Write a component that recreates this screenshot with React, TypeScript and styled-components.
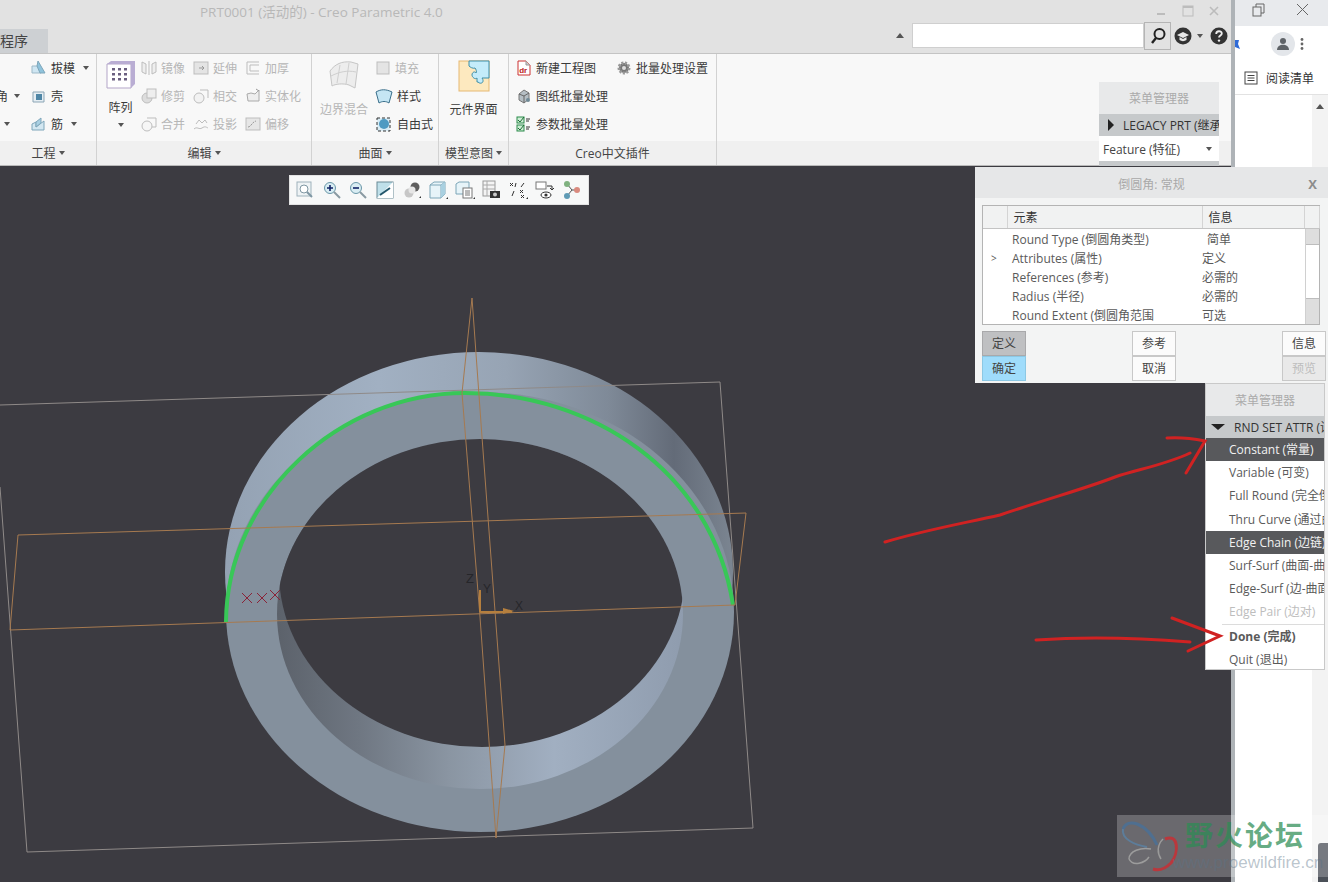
import React from "react";
import styled, { createGlobalStyle } from "styled-components";

const GlobalStyle = createGlobalStyle`
  html, body { margin: 0; padding: 0; background: #fff; }
  body { font-family: "Open Sans", "Noto Sans CJK SC", sans-serif; font-size: 12px; color: #3a3a3a; }
`;

const FONT = `"Open Sans", "Noto Sans CJK SC", sans-serif`;

const Page = styled.div`
  position: relative;
  display: flex;
  width: 1328px;
  height: 882px;
  overflow: hidden;
`;
const Main = styled.div`
  display: flex;
  flex-direction: column;
  width: 1231px;
`;
const Divider = styled.div`
  width: 4px;
  background: #aeb3b7;
`;

/* ---- title bar ---- */
const TitleBar = styled.div`
  display: flex;
  flex-direction: column;
  height: 54px;
  box-sizing: border-box;
  background: #e2e2e2;
  border-bottom: 1px solid #c4c4c4;
`;
const WindowRow = styled.div`
  display: flex;
  justify-content: space-between;
  align-items: center;
  height: 22px;
  padding: 0 10px 0 200px;
`;
const WindowTitle = styled.span`
  font-size: 13.5px;
  color: #b8b8b8;
`;
const WindowButtons = styled.div`
  display: flex;
  gap: 12px;
`;
const CommandRow = styled.div`
  display: flex;
  justify-content: space-between;
  align-items: flex-end;
  height: 31px;
`;
const ActiveTab = styled.div`
  width: 48px;
  height: 24px;
  background: #cdd0d3;
  font-size: 14px;
  line-height: 23px;
  color: #444;
  overflow: hidden;
`;
const SearchArea = styled.div`
  display: flex;
  align-items: center;
  height: 31px;
  margin-right: 3px;
  margin-bottom: 2px;
`;
const CollapseCaret = styled.span`
  width: 0;
  height: 0;
  margin-right: 8px;
  border-left: 4px solid transparent;
  border-right: 4px solid transparent;
  border-bottom: 5px solid #555;
`;
const SearchBox = styled.div`
  width: 230px;
  height: 23px;
  background: #fff;
  border: 1px solid #cfcfcf;
`;
const SearchButton = styled.div`
  display: flex;
  align-items: center;
  justify-content: center;
  width: 25px;
  height: 26px;
  margin-right: 3px;
  border: 1px solid #b5b5b5;
`;

/* ---- ribbon ---- */
const Ribbon = styled.div`
  position: relative;
  display: flex;
  height: 112px;
  background: linear-gradient(#f8f8f8 0, #f8f8f8 87px, #f0f0f0 87px, #f0f0f0 100%);
  border-bottom: 1px solid #b9b9b9;
  box-sizing: border-box;
  overflow: hidden;
`;
const Group = styled.div<{ $w: number }>`
  display: flex;
  flex-direction: column;
  width: ${(p) => p.$w}px;
  border-right: 1px solid #d2d2d2;
  box-sizing: border-box;
`;
const GroupBody = styled.div<{ $pad?: number }>`
  display: flex;
  height: 87px;
  padding-left: ${(p) => p.$pad ?? 0}px;
`;
const GroupFooter = styled.div`
  display: flex;
  align-items: center;
  justify-content: center;
  gap: 3px;
  flex: 1;
  font-size: 12px;
  color: #444;
`;
const ToolColumn = styled.div<{ $w: number }>`
  display: flex;
  flex-direction: column;
  width: ${(p) => p.$w}px;
  flex: none;
`;
const Tool = styled.div<{ $muted?: boolean }>`
  display: flex;
  align-items: center;
  gap: 4px;
  height: 28px;
  white-space: nowrap;
  font-size: 12px;
  color: ${(p) => (p.$muted ? "#b6b6b6" : "#3a3a3a")};
`;
const BigTool = styled.div<{ $w: number; $muted?: boolean }>`
  display: flex;
  flex-direction: column;
  align-items: center;
  width: ${(p) => p.$w}px;
  flex: none;
  padding-top: 6px;
  font-size: 12px;
  color: ${(p) => (p.$muted ? "#b6b6b6" : "#3a3a3a")};
`;
const BigLabel = styled.span`
  margin-top: 10px;
  line-height: 16px;
`;
const Caret = styled.span<{ $gap?: number }>`
  display: inline-block;
  width: 0;
  height: 0;
  margin-left: ${(p) => p.$gap ?? 0}px;
  border-left: 3.5px solid transparent;
  border-right: 3.5px solid transparent;
  border-top: 4px solid #555;
`;
const RowTools = styled.div`
  display: flex;
  gap: 20px;
`;

/* ---- canvas ---- */
const Canvas = styled.div`
  position: relative;
  flex: 1;
  background: #3c3b41;
`;
const CanvasDrawing = styled.svg`
  display: block;
  width: 100%;
  height: 100%;
`;
const ViewBar = styled.div`
  position: absolute;
  left: 289px;
  top: 9px;
  display: flex;
  align-items: center;
  height: 30px;
  padding: 0 3px 0 2px;
  box-sizing: border-box;
  background: #f7f8f8;
  border: 1px solid #e3e3e3;
`;
const ViewButton = styled.div`
  display: flex;
  align-items: center;
  justify-content: center;
  width: 26.6px;
`;

/* ---- browser pane ---- */
const Browser = styled.div`
  display: flex;
  flex-direction: column;
  flex: 1;
  background: #fff;
`;
const BrowserTop = styled.div`
  display: flex;
  align-items: center;
  gap: 30px;
  height: 26px;
  padding: 0 17px 6px 16px;
  box-sizing: border-box;
  background: #e8eaed;
`;
const BrowserAddress = styled.div`
  display: flex;
  align-items: center;
  height: 35px;
`;
const AvatarCircle = styled.div`
  display: flex;
  align-items: center;
  justify-content: center;
  width: 24px;
  height: 24px;
  margin-left: 26px;
  border-radius: 50%;
  background: #e3e6ea;
`;
const BookmarkRow = styled.div`
  display: flex;
  align-items: center;
  gap: 8px;
  height: 33px;
  padding-left: 9px;
  border-bottom: 1px solid #e2e2e2;
  font-size: 12px;
  color: #333;
`;
const BrowserBody = styled.div`
  display: flex;
  justify-content: flex-end;
  flex: 1;
`;
const ScrollTrack = styled.div`
  position: relative;
  width: 16px;
  background: #f3f3f3;
`;
const ScrollArrow = styled.span`
  position: absolute;
  left: 4px;
  top: 9px;
  width: 0;
  height: 0;
  border-left: 4px solid transparent;
  border-right: 4px solid transparent;
  border-bottom: 5px solid #555;
`;
const ScrollThumb = styled.div`
  position: absolute;
  right: 0;
  bottom: 0;
  width: 10px;
  height: 39px;
  background: #4b5058;
  border-radius: 3px 0 0 0;
`;

/* ---- floating menu manager ---- */
const MenuManager = styled.div<{ $l: number; $t: number }>`
  position: absolute;
  left: ${(p) => p.$l}px;
  top: ${(p) => p.$t}px;
  width: 120px;
  overflow: hidden;
  background: #fff;
  font-family: ${FONT};
  font-size: 12px;
  white-space: nowrap;
`;
const MenuTitle = styled.div`
  height: 32px;
  line-height: 33px;
  text-align: center;
  background: #e8e9ea;
  color: #ababab;
`;
const MenuHeader = styled.div`
  display: flex;
  align-items: center;
  gap: 9px;
  height: 22px;
  padding-left: 5px;
  background: #c6c9cb;
  color: #333;
`;
const MenuItem = styled.div<{ $on?: boolean; $off?: boolean; $bold?: boolean }>`
  height: 23.2px;
  line-height: 23px;
  padding-left: 23px;
  background: ${(p) => (p.$on ? "#58595c" : "#fff")};
  color: ${(p) => (p.$on ? "#f2f2f2" : p.$off ? "#bdbdbd" : "#5a5a5a")};
  font-weight: ${(p) => (p.$bold ? 700 : 400)};
`;
const MenuRule = styled.div`
  height: 1px;
  margin-left: 16px;
  background: #dcdcdc;
`;
const FeatureRow = styled.div`
  display: flex;
  align-items: center;
  justify-content: space-between;
  height: 25px;
  padding: 0 7px 0 4px;
  background: #fff;
  color: #444;
`;
const TriRight = styled.span`
  width: 0;
  height: 0;
  border-top: 6px solid transparent;
  border-bottom: 6px solid transparent;
  border-left: 6px solid #222;
  margin-left: 4px;
`;
const TriDown = styled.span`
  width: 0;
  height: 0;
  border-left: 7px solid transparent;
  border-right: 7px solid transparent;
  border-top: 6px solid #222;
`;
const MenuFrame = styled(MenuManager)`
  height: 287px;
  border: 1px solid #c9c9c9;
  box-sizing: border-box;
`;

/* ---- round dialog ---- */
const Dialog = styled.div`
  position: absolute;
  left: 975px;
  top: 167px;
  width: 353px;
  height: 216px;
  box-sizing: border-box;
  background: #f3f4f4;
  font-family: ${FONT};
`;
const DialogTitle = styled.div`
  position: relative;
  height: 31px;
  line-height: 35px;
  text-align: center;
  background: #e6e7e8;
  color: #a9a9a9;
`;
const DialogClose = styled.span`
  position: absolute;
  right: 11px;
  top: 0;
  font-size: 13px;
  font-weight: 700;
  color: #8c8c8c;
`;
const DialogBody = styled.div`
  padding: 7px 8px 0 7px;
`;
const StepFrame = styled.div`
  width: 338px;
  height: 120px;
  box-sizing: border-box;
  background: #fff;
  border: 1px solid #b4b4b4;
`;
const StepTable = styled.table`
  width: 336px;
  border-collapse: collapse;
  table-layout: fixed;
  thead > tr { background-color: #f1f2f2; }
  th {
    height: 22px;
    padding: 0 0 0 6px;
    text-align: left;
    font-weight: 400;
    color: #333;
    border-right: 1px solid #d4d4d4;
    border-bottom: 1px solid #c4c4c4;
  }
  td {
    height: 19px;
    padding: 0 0 0 5px;
    white-space: nowrap;
    overflow: hidden;
    color: #5a5a5a;
  }
  td:first-child { font-size: 10px; padding-left: 8px; }
  td:last-child { padding: 0; }
`;
const StepScroll = styled.div`
  display: flex;
  flex-direction: column;
  align-items: stretch;
  width: 15px;
  height: 95px;
  margin-left: 1px;
  background: #dedede;
  border-left: 1px solid #d0d0d0;
  box-sizing: border-box;
`;
const StepThumb = styled.div`
  height: 53px;
  margin-top: 15px;
  background: #fff;
  border-top: 1px solid #bdbdbd;
  border-bottom: 1px solid #bdbdbd;
`;
const ButtonRows = styled.div`
  display: flex;
  justify-content: space-between;
  margin-top: 6px;
  margin-right: -6px;
`;
const ButtonStack = styled.div`
  display: flex;
  flex-direction: column;
`;
const DialogButton = styled.div<{ $kind?: "pressed" | "ok" | "off" }>`
  width: 44px;
  height: 25px;
  box-sizing: border-box;
  line-height: 23px;
  text-align: center;
  font-size: 12px;
  color: ${(p) => (p.$kind === "off" ? "#bdbdbd" : "#444")};
  background: ${(p) =>
    p.$kind === "pressed" ? "#bfc0c2" : p.$kind === "ok" ? "#9fdcfb" : p.$kind === "off" ? "#e9e9e9" : "#fbfbfb"};
  border: 1px solid ${(p) => (p.$kind === "pressed" ? "#a9a9ab" : p.$kind === "ok" ? "#8cc8e4" : "#c8c8c8")};
`;

/* ---- overlays ---- */
const ArrowLayer = styled.svg`
  position: absolute;
  left: 0;
  top: 0;
  width: 1328px;
  height: 882px;
  pointer-events: none;
`;
const Watermark = styled.div`
  position: absolute;
  left: 1117px;
  top: 815px;
  display: flex;
  width: 211px;
  height: 62px;
  background: rgba(255, 255, 255, 0.24);
`;
const WatermarkText = styled.div`
  display: flex;
  flex-direction: column;
  padding-left: 2px;
`;
const WatermarkTitle = styled.div`
  font-family: "Noto Sans CJK SC", sans-serif;
  font-size: 28px;
  font-weight: 700;
  line-height: 38px;
  letter-spacing: 2px;
  color: rgba(44, 140, 84, 0.72);
`;
const WatermarkUrl = styled.div`
  margin-left: -12px;
  font-family: "Liberation Sans", sans-serif;
  font-size: 17px;
  line-height: 20px;
  white-space: nowrap;
  color: rgba(90, 115, 135, 0.42);
`;

const Svg = styled.svg`
  display: block;
  flex: none;
`;

const Ic = ({ s = 16, vb = 16, children }: { s?: number; vb?: number; children: React.ReactNode }) => (
  <Svg width={s} height={s} viewBox={`0 0 ${vb} ${vb}`} fill="none">
    {children}
  </Svg>
);

const G = "#bdbdbd";

const Icons = {
  draft: (
    <Ic>
      <path d="M1 13V6h6l3 7z" fill="#cfe6f2" stroke="#9db9c8" />
      <path d="M7 1l7 12H9L6 6z" fill="#8fc3dc" stroke="#7ea6ba" />
    </Ic>
  ),
  shell: (
    <Ic>
      <path d="M2 4h11v10H2z" fill="#e6eef3" stroke="#8ba5b5" />
      <path d="M5 6h6v6H5z" fill="#4f86a6" />
    </Ic>
  ),
  rib: (
    <Ic>
      <path d="M1 8l4-2v5l8-6v9H1z" fill="#d3e7f1" stroke="#7ea6ba" />
      <path d="M5 6l5-4v5l-5 4z" fill="#a9d0e3" stroke="#7ea6ba" />
    </Ic>
  ),
  pattern: (
    <Ic s={30} vb={30}>
      <path d="M1 4h24v24H1z" fill="#fff" stroke="#b3a5c8" />
      <path d="M1 4l4-3h24l-4 3zM25 4l4-3v23l-4 4z" fill="#b9add3" />
      {[8, 13, 18, 23].slice(0, 3).map((y) =>
        [6, 12, 18].map((x) => <rect key={`${x}${y}`} x={x} y={y} width="3" height="2.5" fill="#6a5f80" />)
      )}
    </Ic>
  ),
  mirror: (
    <Ic>
      <path d="M1 2l4 2v10l-4-2zM15 2l-4 2v10l4-2z" stroke={G} fill="#eee" />
      <path d="M8 1v14" stroke={G} />
    </Ic>
  ),
  extend: (
    <Ic>
      <rect x="1" y="2" width="14" height="12" fill="#e4e4e4" stroke={G} />
      <path d="M6 8h5M9 6l2 2-2 2" stroke="#999" />
    </Ic>
  ),
  thicken: (
    <Ic>
      <path d="M2 2h12M2 2v12h12M5 5h9M5 5v6h9" stroke={G} />
    </Ic>
  ),
  trim: (
    <Ic>
      <circle cx="6" cy="10" r="5" fill="#ddd" stroke={G} />
      <rect x="6" y="1" width="9" height="9" fill="#eee" stroke={G} />
    </Ic>
  ),
  intersect: (
    <Ic>
      <circle cx="6" cy="10" r="5" stroke={G} fill="#f2f2f2" />
      <path d="M7 2h8v8" stroke={G} />
    </Ic>
  ),
  solidify: (
    <Ic>
      <path d="M2 6l4-1 4 1 4-4v11H3z" stroke="#aaa" fill="#eee" />
      <path d="M11 1l3 2" stroke="#999" />
    </Ic>
  ),
  merge: (
    <Ic>
      <circle cx="6" cy="10" r="5" stroke={G} fill="#f6f6f6" />
      <path d="M6 2h9v9H11" stroke={G} />
    </Ic>
  ),
  project: (
    <Ic>
      <path d="M1 13c3-3 5 1 8-1s4-1 6 0" stroke={G} />
      <path d="M3 8l3-4 3 3 3-3 2 3" stroke={G} />
    </Ic>
  ),
  offset: (
    <Ic>
      <rect x="1" y="2" width="14" height="12" fill="#e6e6e6" stroke={G} />
      <path d="M3 11c3 0 4-5 8-6" stroke="#999" strokeDasharray="2 1" />
    </Ic>
  ),
  boundary: (
    <Ic s={32} vb={32}>
      <path d="M2 11C7 4 14 1 23 2l7 2-3 24-6-3C15 23 7 24 4 26z" fill="#ededed" stroke="#c6c6c6" />
      <path d="M12 5L9 23M21 3L18 24M3 16c8-4 16-6 25-4" stroke="#cfcfcf" />
    </Ic>
  ),
  fill: (
    <Ic>
      <rect x="2" y="2" width="12" height="12" fill="#e4e4e4" stroke={G} />
    </Ic>
  ),
  style: (
    <Ic s={18} vb={18}>
      <path d="M1 5c5-3 10-3 16 0l-3 11c-3-2-7-2-10 0z" fill="#c5e6f4" stroke="#3a6f8b" />
    </Ic>
  ),
  freestyle: (
    <Ic s={18} vb={18}>
      <rect x="2" y="3" width="13" height="13" fill="#d9ecf5" stroke="#333" strokeDasharray="3 2" />
      <circle cx="9" cy="9" r="5" fill="#4d9ac2" />
    </Ic>
  ),
  puzzle: (
    <Ic s={32} vb={32}>
      <rect x="1" y="1" width="30" height="30" fill="#fde9bf" stroke="#e5b872" />
      <path d="M11 1h20v17h-7c3 4-1 7-4 4h-1v-4c-2 2-5-1-5-3 0-3 3-4 4-2 1-1 0-4-1-5-2 1-5-1-6-2z" fill="#c4ecfa" stroke="#3f8fa8" />
    </Ic>
  ),
  drawing: (
    <Ic>
      <path d="M2 1h8l4 4v10H2z" fill="#fff" stroke="#c33" />
      <path d="M10 1v4h4" fill="#ccc" stroke="#999" />
      <text x="3.2" y="13" fontSize="8" fontFamily="Liberation Sans" fontWeight="700" fill="#b22">
        dr
      </text>
    </Ic>
  ),
  gear: (
    <Ic>
      <circle cx="8" cy="8" r="5" fill="#777" stroke="#999" strokeWidth="3" strokeDasharray="2 1.4" />
      <circle cx="8" cy="8" r="2" fill="#ddd" />
    </Ic>
  ),
  press: (
    <Ic>
      <path d="M3 6l5-4 5 3v6l-5 4-5-3z" fill="#b5bec4" stroke="#777" />
      <path d="M8 8v7M3 6l5 2 5-3" stroke="#666" />
      <circle cx="12" cy="12" r="2" fill="#6f8996" />
    </Ic>
  ),
  params: (
    <Ic>
      <rect x="1" y="1" width="7" height="6" fill="#cfeed6" stroke="#2a8a4a" />
      <rect x="1" y="9" width="7" height="6" fill="#cfeed6" stroke="#2a8a4a" />
      <path d="M2 4l2 2 4-5M2 12l2 2 4-5" stroke="#1c6a35" />
      <path d="M10 3h4M10 5h3M10 11h4M10 13h3" stroke="#333" />
    </Ic>
  ),
};

const viewIcons = [
  <Ic key="a" s={18} vb={18}>
    <rect x="1" y="1" width="14" height="14" fill="#eef3f5" stroke="#9fb2bb" />
    <circle cx="8" cy="8" r="4" fill="#fff" stroke="#7f97a3" />
    <path d="M11 11l5 5" stroke="#7f97a3" strokeWidth="2" />
  </Ic>,
  <Ic key="b" s={18} vb={18}>
    <circle cx="7" cy="7" r="5.5" fill="#d9edf3" stroke="#6a97a8" />
    <path d="M4 7h6M7 4v6" stroke="#126" strokeWidth="1.6" />
    <path d="M11 11l6 6" stroke="#8a9aa2" strokeWidth="2" />
  </Ic>,
  <Ic key="c" s={18} vb={18}>
    <circle cx="7" cy="7" r="5.5" fill="#d9edf3" stroke="#6a97a8" />
    <path d="M4 7h6" stroke="#126" strokeWidth="1.6" />
    <path d="M11 11l6 6" stroke="#8a9aa2" strokeWidth="2" />
  </Ic>,
  <Ic key="d" s={18} vb={18}>
    <rect x="1" y="1" width="16" height="16" fill="#bfe0ea" stroke="#6b8a96" />
    <path d="M1 17L17 1v16z" fill="#fff" />
    <path d="M4 14l10-7" stroke="#23566b" strokeWidth="2" />
  </Ic>,
  <Ic key="e" s={20} vb={20}>
    <circle cx="7" cy="13" r="4.5" fill="#c7c7c7" />
    <circle cx="13" cy="7" r="4.5" fill="#5d5d5d" />
    <circle cx="10" cy="10" r="3.5" fill="#e6e6e6" />
    <path d="M17 18h2v-2z" fill="#333" />
  </Ic>,
  <Ic key="f" s={20} vb={20}>
    <path d="M2 5l4-3h11v12l-4 4H2z" fill="#e7f4f9" stroke="#7ca6b8" />
    <path d="M13 5h-11M13 5l4-3M13 5v13" stroke="#7ca6b8" />
    <path d="M13 5l4-3v12l-4 4z" fill="#a9d0e0" />
    <path d="M18 19h2v-2z" fill="#333" />
  </Ic>,
  <Ic key="g" s={20} vb={20}>
    <path d="M1 4l3-2h10v12H1z" fill="#e7f4f9" stroke="#7ca6b8" />
    <rect x="8" y="8" width="9" height="10" fill="#fff" stroke="#777" />
    <path d="M10 11h5M10 13h5M10 15h5" stroke="#777" />
    <path d="M18 19h2v-2z" fill="#333" />
  </Ic>,
  <Ic key="h" s={20} vb={20}>
    <rect x="2" y="1" width="12" height="15" fill="#f4f4f4" stroke="#999" />
    <path d="M2 5h12M2 9h12M6 1v15" stroke="#aaa" />
    <rect x="9" y="11" width="10" height="7" fill="#333" />
    <circle cx="14" cy="14.5" r="2" fill="#ccc" />
  </Ic>,
  <Ic key="i" s={20} vb={20}>
    <path d="M2 3l3 3M5 3L2 6M12 10l3 3M15 10l-3 3M13 15l3 3M16 15l-3 3" stroke="#333" />
    <path d="M8 3l-1 4M4 16l2-5M16 3l-3 4" stroke="#333" />
    <path d="M18 19h2v-2z" fill="#333" />
  </Ic>,
  <Ic key="j" s={20} vb={20}>
    <rect x="1" y="2" width="10" height="7" fill="#fff" stroke="#777" />
    <path d="M12 6h5v4M15 8l2 2 2-2" stroke="#333" />
    <ellipse cx="11" cy="15" rx="5" ry="3" fill="#fff" stroke="#333" />
    <circle cx="11" cy="15" r="1.6" fill="#333" />
  </Ic>,
  <Ic key="k" s={20} vb={20}>
    <path d="M6 4l5 6-5 6M11 10h5" stroke="#555" />
    <circle cx="6" cy="4" r="3" fill="#7fb17f" />
    <circle cx="16" cy="10" r="3" fill="#d98a7f" />
    <circle cx="6" cy="16" r="3" fill="#5f9bb5" />
  </Ic>,
];

const dialogRows: [string, string, string][] = [
  ["", "Round Type (倒圆角类型)", "简单"],
  [">", "Attributes (属性)", "定义"],
  ["", "References (参考)", "必需的"],
  ["", "Radius (半径)", "必需的"],
  ["", "Round Extent (倒圆角范围", "可选"],
];

const RingDrawing = () => (
  <CanvasDrawing viewBox="0 166 1231 716">
    <defs>
      <linearGradient id="outerWall" gradientUnits="userSpaceOnUse" x1="226" x2="735" y1="0" y2="0">
        <stop offset="0" stopColor="#94a2b3" />
        <stop offset="0.3" stopColor="#a1b0c2" />
        <stop offset="0.55" stopColor="#97a4b4" />
        <stop offset="0.75" stopColor="#7f8a98" />
        <stop offset="0.88" stopColor="#636b78" />
        <stop offset="1" stopColor="#7c8692" />
      </linearGradient>
      <linearGradient id="innerWall" gradientUnits="userSpaceOnUse" x1="278" x2="684" y1="0" y2="0">
        <stop offset="0" stopColor="#5c626b" />
        <stop offset="0.2" stopColor="#6f7782" />
        <stop offset="0.42" stopColor="#8a95a2" />
        <stop offset="0.68" stopColor="#a1afc1" />
        <stop offset="1" stopColor="#8f9cae" />
      </linearGradient>
      <clipPath id="frontHole">
        <ellipse cx="480" cy="614" rx="203" ry="175" />
      </clipPath>
    </defs>
    <ellipse cx="479" cy="572" rx="254" ry="220" fill="url(#outerWall)" />
    <ellipse cx="480" cy="612" rx="254" ry="220" fill="#84909d" />
    <ellipse cx="480" cy="614" rx="203" ry="175" fill="url(#innerWall)" />
    <ellipse cx="482" cy="572" rx="203" ry="175" fill="#3c3b41" clipPath="url(#frontHole)" />
    <path
      d="M226 622C227 495 340 393 465 393C590 393 712 470 733 605"
      stroke="#38c757"
      strokeWidth="4"
      fill="none"
    />
    <path d="M0 405L720 382L753 828L27 852L0 487" stroke="#8f8a88" fill="none" />
    <path d="M18 535L746 513L735 605L10 630Z" stroke="#a67a50" fill="none" />
    <path
      d="M472 298L462 393L480 617L496 838L505 745L482 437Z"
      stroke="#a67a50"
      fill="none"
    />
    <path d="M480 590V612M480 612H512" stroke="#b57f3e" strokeWidth="2" />
    <path d="M503 608L514 611L503 614Z" fill="#b57f3e" />
    <text x="466" y="583" fontSize="13" fill="#26262a" fontFamily="Liberation Sans">
      Z
    </text>
    <text x="483" y="593" fontSize="12" fill="#26262a" fontFamily="Liberation Sans">
      Y
    </text>
    <text x="515" y="610" fontSize="12" fill="#26262a" fontFamily="Liberation Sans">
      X
    </text>
    {[247, 262, 275].map((x, i) => (
      <path
        key={x}
        d={`M${x - 5} ${(i === 2 ? 595 : 598) - 5}l10 10m0 -10l-10 10`}
        stroke="#8a2338"
        strokeWidth="1"
      />
    ))}
  </CanvasDrawing>
);

export default function App() {
  return (
    <Page>
      <GlobalStyle />
      <Main>
        <TitleBar>
          <WindowRow>
            <WindowTitle>PRT0001 (活动的) - Creo Parametric 4.0</WindowTitle>
            <WindowButtons>
              <Ic s={14} vb={14}>
                <path d="M2 10h8" stroke="#bcbcbc" strokeWidth="2" />
              </Ic>
              <Ic s={14} vb={14}>
                <rect x="2" y="2" width="10" height="10" stroke="#bcbcbc" />
                <path d="M2 3h10" stroke="#bcbcbc" strokeWidth="2" />
              </Ic>
              <Ic s={14} vb={14}>
                <path d="M3 3l8 8m0-8l-8 8" stroke="#bcbcbc" strokeWidth="1.6" />
              </Ic>
            </WindowButtons>
          </WindowRow>
          <CommandRow>
            <ActiveTab>程序</ActiveTab>
            <SearchArea>
              <CollapseCaret />
              <SearchBox />
              <SearchButton>
                <Ic s={18} vb={18}>
                  <circle cx="10.5" cy="7" r="5" stroke="#222" strokeWidth="2" />
                  <path d="M7 11l-4 5" stroke="#222" strokeWidth="2.4" />
                </Ic>
              </SearchButton>
              <Ic s={18} vb={18}>
                <circle cx="9" cy="9" r="8.5" fill="#333" />
                <path d="M3 8l6-3 6 3-6 3z" fill="#e8e8e8" />
                <path d="M5.5 10v3c2 1.5 5 1.5 7 0v-3L9 12z" fill="#e8e8e8" />
              </Ic>
              <Caret $gap={5} />
              <span style={{ width: 7 }} />
              <Ic s={18} vb={18}>
                <circle cx="9" cy="9" r="8.5" fill="#333" />
                <path d="M6.2 7c0-3.6 5.6-3.6 5.6-.4 0 2-2.8 2-2.8 4" stroke="#eee" strokeWidth="1.8" />
                <circle cx="9" cy="13.6" r="1.2" fill="#eee" />
              </Ic>
            </SearchArea>
          </CommandRow>
        </TitleBar>

        <Ribbon>
          <Group $w={97}>
            <GroupBody>
              <ToolColumn $w={31}>
                <Tool />
                <Tool style={{ marginLeft: -4 }}>
                  角<Caret $gap={2} />
                </Tool>
                <Tool>
                  <Caret $gap={4} />
                </Tool>
              </ToolColumn>
              <ToolColumn $w={60}>
                <Tool>
                  {Icons.draft}拔模
                  <Caret $gap={4} />
                </Tool>
                <Tool>{Icons.shell}壳</Tool>
                <Tool>
                  {Icons.rib}筋
                  <Caret $gap={4} />
                </Tool>
              </ToolColumn>
            </GroupBody>
            <GroupFooter>
              工程
              <Caret />
            </GroupFooter>
          </Group>

          <Group $w={215}>
            <GroupBody $pad={7}>
              <BigTool $w={33}>
                {Icons.pattern}
                <BigLabel>阵列</BigLabel>
                <Caret $gap={0} style={{ marginTop: 7 }} />
              </BigTool>
              <ToolColumn $w={52} style={{ marginLeft: 4 }}>
                <Tool $muted>{Icons.mirror}镜像</Tool>
                <Tool $muted>{Icons.trim}修剪</Tool>
                <Tool $muted>{Icons.merge}合并</Tool>
              </ToolColumn>
              <ToolColumn $w={52}>
                <Tool $muted>{Icons.extend}延伸</Tool>
                <Tool $muted>{Icons.intersect}相交</Tool>
                <Tool $muted>{Icons.project}投影</Tool>
              </ToolColumn>
              <ToolColumn $w={60}>
                <Tool $muted>{Icons.thicken}加厚</Tool>
                <Tool $muted>{Icons.solidify}实体化</Tool>
                <Tool $muted>{Icons.offset}偏移</Tool>
              </ToolColumn>
            </GroupBody>
            <GroupFooter>
              编辑
              <Caret />
            </GroupFooter>
          </Group>

          <Group $w={127}>
            <GroupBody $pad={7}>
              <BigTool $w={50} $muted>
                {Icons.boundary}
                <BigLabel>边界混合</BigLabel>
              </BigTool>
              <ToolColumn $w={60} style={{ marginLeft: 6 }}>
                <Tool $muted>
                  {Icons.fill}
                  <span style={{ color: "#b6b6b6" }}>填充</span>
                </Tool>
                <Tool>{Icons.style}样式</Tool>
                <Tool>{Icons.freestyle}自由式</Tool>
              </ToolColumn>
            </GroupBody>
            <GroupFooter>
              曲面
              <Caret />
            </GroupFooter>
          </Group>

          <Group $w={70}>
            <GroupBody $pad={9}>
              <BigTool $w={51}>
                {Icons.puzzle}
                <BigLabel>元件界面</BigLabel>
              </BigTool>
            </GroupBody>
            <GroupFooter>
              模型意图
              <Caret />
            </GroupFooter>
          </Group>

          <Group $w={208}>
            <GroupBody $pad={7}>
              <ToolColumn $w={190}>
                <RowTools>
                  <Tool>{Icons.drawing}新建工程图</Tool>
                  <Tool>{Icons.gear}批量处理设置</Tool>
                </RowTools>
                <Tool>{Icons.press}图纸批量处理</Tool>
                <Tool>{Icons.params}参数批量处理</Tool>
              </ToolColumn>
            </GroupBody>
            <GroupFooter>Creo中文插件</GroupFooter>
          </Group>
        </Ribbon>

        <Canvas>
          <RingDrawing />
          <ViewBar>
            {viewIcons.map((icon, i) => (
              <ViewButton key={i}>{icon}</ViewButton>
            ))}
          </ViewBar>
        </Canvas>
      </Main>
      <Divider />
      <Browser>
        <BrowserTop>
          <Ic s={14} vb={14}>
            <rect x="2" y="4" width="8" height="9" stroke="#666" />
            <path d="M5 4V1h8v9h-3" stroke="#666" />
          </Ic>
          <Ic s={14} vb={14}>
            <path d="M2 1l11 11m0-11L2 12" stroke="#666" />
          </Ic>
        </BrowserTop>
        <BrowserAddress>
          <Ic s={10} vb={10}>
            <path d="M0 1h4L3 5l2 5-5-2z" fill="#2f6bd8" />
          </Ic>
          <AvatarCircle>
            <Ic s={14} vb={14}>
              <circle cx="7" cy="4" r="3" fill="#5f6368" />
              <path d="M1 13c0-7 12-7 12 0z" fill="#5f6368" />
            </Ic>
          </AvatarCircle>
          <Ic s={14} vb={14}>
            <circle cx="7" cy="2.5" r="1.4" fill="#666" />
            <circle cx="7" cy="7" r="1.4" fill="#666" />
            <circle cx="7" cy="11.5" r="1.4" fill="#666" />
          </Ic>
        </BrowserAddress>
        <BookmarkRow>
          <Ic s={14} vb={14}>
            <rect x="1" y="1" width="12" height="12" stroke="#444" />
            <path d="M3.5 4.5h7M3.5 7h7M3.5 9.5h7" stroke="#444" />
          </Ic>
          阅读清单
        </BookmarkRow>
        <BrowserBody>
          <ScrollTrack>
            <ScrollArrow />
            <ScrollThumb />
          </ScrollTrack>
        </BrowserBody>
      </Browser>

      <MenuManager $l={1099} $t={82} style={{ height: 84 }}>
        <MenuTitle>菜单管理器</MenuTitle>
        <MenuHeader>
          <TriRight />
          LEGACY PRT (继承零件)
        </MenuHeader>
        <FeatureRow>
          Feature (特征)
          <Caret />
        </FeatureRow>
        <MenuHeader>
          <TriRight />
          FEAT (特征)
        </MenuHeader>
      </MenuManager>

      <Dialog>
        <DialogTitle>
          倒圆角: 常规
          <DialogClose>X</DialogClose>
        </DialogTitle>
        <DialogBody>
          <StepFrame>
            <StepTable>
              <colgroup>
                <col style={{ width: 24 }} />
                <col style={{ width: 195 }} />
                <col style={{ width: 102 }} />
                <col style={{ width: 15 }} />
              </colgroup>
              <thead>
                <tr>
                  <th />
                  <th>元素</th>
                  <th>信息</th>
                  <th />
                </tr>
              </thead>
              <tbody>
                {dialogRows.map((row, i) => (
                  <tr key={row[1]}>
                    <td>{row[0]}</td>
                    <td>{row[1]}</td>
                    <td>{row[2]}</td>
                    {i === 0 && (
                      <td rowSpan={5}>
                        <StepScroll>
                          <StepThumb />
                        </StepScroll>
                      </td>
                    )}
                  </tr>
                ))}
              </tbody>
            </StepTable>
          </StepFrame>
          <ButtonRows>
            <ButtonStack>
              <DialogButton $kind="pressed">定义</DialogButton>
              <DialogButton $kind="ok">确定</DialogButton>
            </ButtonStack>
            <ButtonStack>
              <DialogButton>参考</DialogButton>
              <DialogButton>取消</DialogButton>
            </ButtonStack>
            <ButtonStack>
              <DialogButton>信息</DialogButton>
              <DialogButton $kind="off">预览</DialogButton>
            </ButtonStack>
          </ButtonRows>
        </DialogBody>
      </Dialog>

      <MenuFrame $l={1205} $t={383}>
        <MenuTitle>菜单管理器</MenuTitle>
        <MenuHeader>
          <TriDown />
          RND SET ATTR (设置属性)
        </MenuHeader>
        <MenuItem $on>Constant (常量)</MenuItem>
        <MenuItem>Variable (可变)</MenuItem>
        <MenuItem>Full Round (完全倒圆角)</MenuItem>
        <MenuItem>Thru Curve (通过曲线)</MenuItem>
        <MenuItem $on>Edge Chain (边链)</MenuItem>
        <MenuItem>Surf-Surf (曲面-曲面)</MenuItem>
        <MenuItem>Edge-Surf (边-曲面)</MenuItem>
        <MenuItem $off>Edge Pair (边对)</MenuItem>
        <MenuRule />
        <MenuItem $bold>Done (完成)</MenuItem>
        <MenuItem>Quit (退出)</MenuItem>
      </MenuFrame>

      <Watermark>
        <Svg width="66" height="62" viewBox="0 0 66 62" fill="none">
          <path d="M6 14C10 2 30 8 40 30" stroke="#4f6f90" strokeWidth="3" />
          <path d="M6 14C4 24 18 30 30 32" stroke="#5d7d9a" strokeWidth="2" />
          <path d="M48 24c14-6 14 14 6 24-6 6-12 8-18 6" stroke="#b9383d" strokeWidth="3" />
          <path d="M46 24c-6 6-6 14-2 20" stroke="#9a9a9a" strokeWidth="1.5" />
          <path d="M12 44c0-8 12-12 22-10M12 44c4 8 16 4 20-2" stroke="#9c9c9c" strokeWidth="1.5" />
        </Svg>
        <WatermarkText>
          <WatermarkTitle>野火论坛</WatermarkTitle>
          <WatermarkUrl>www.proewildfire.cn</WatermarkUrl>
        </WatermarkText>
      </Watermark>

      <ArrowLayer viewBox="0 0 1328 882" fill="none">
        <path
          d="M885 542C925 530 960 524 1000 515C1050 498 1090 487 1115 477C1135 470 1165 465 1190 453"
          stroke="#d02222"
          strokeWidth="3"
          strokeLinecap="round"
        />
        <path d="M1167 438C1180 437 1195 439 1205 441L1186 473" stroke="#d02222" strokeWidth="3" strokeLinecap="round" />
        <path d="M1036 640C1080 637 1140 638 1190 642" stroke="#d02222" strokeWidth="3" strokeLinecap="round" />
        <path d="M1172 618L1220 636L1188 651" stroke="#d02222" strokeWidth="3" strokeLinecap="round" />
      </ArrowLayer>
    </Page>
  );
}
